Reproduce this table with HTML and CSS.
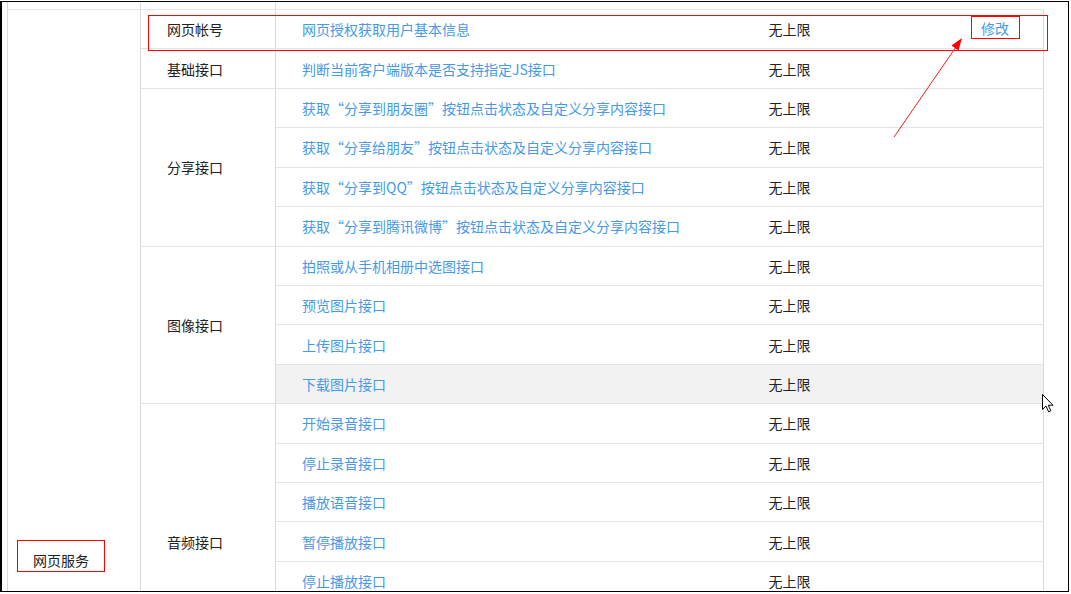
FILE: index.html
```html
<!DOCTYPE html>
<html lang="zh-CN">
<head>
<meta charset="utf-8">
<title>接口权限</title>
<link rel="stylesheet" href="styles.css">
</head>
<body>
<div class="frame">
  <table class="perm">
    <colgroup>
      <col class="w1"><col class="w2"><col class="w3"><col class="w4"><col class="w5">
    </colgroup>
    <tr class="partial">
      <td class="c1"></td><td class="c2"></td><td class="c3" colspan="3"></td>
    </tr>
    <tr class="r">
      <td class="c1 svc" rowspan="17"><span class="svc-label">网页服务</span></td>
      <td class="c2">网页帐号</td>
      <td class="c3"><a class="link">网页授权获取用户基本信息</a></td>
      <td class="c4">无上限</td>
      <td class="c5"><a class="link edit">修改</a></td>
    </tr>
    <tr class="r">
      <td class="c2">基础接口</td>
      <td class="c3"><a class="link">判断当前客户端版本是否支持指定JS接口</a></td>
      <td class="c4">无上限</td><td class="c5"></td>
    </tr>
    <tr class="r">
      <td class="c2" rowspan="4">分享接口</td>
      <td class="c3"><a class="link">获取“分享到朋友圈”按钮点击状态及自定义分享内容接口</a></td>
      <td class="c4">无上限</td><td class="c5"></td>
    </tr>
    <tr class="r">
      <td class="c3"><a class="link">获取“分享给朋友”按钮点击状态及自定义分享内容接口</a></td>
      <td class="c4">无上限</td><td class="c5"></td>
    </tr>
    <tr class="r">
      <td class="c3"><a class="link">获取“分享到QQ”按钮点击状态及自定义分享内容接口</a></td>
      <td class="c4">无上限</td><td class="c5"></td>
    </tr>
    <tr class="r">
      <td class="c3"><a class="link">获取“分享到腾讯微博”按钮点击状态及自定义分享内容接口</a></td>
      <td class="c4">无上限</td><td class="c5"></td>
    </tr>
    <tr class="r">
      <td class="c2" rowspan="4">图像接口</td>
      <td class="c3"><a class="link">拍照或从手机相册中选图接口</a></td>
      <td class="c4">无上限</td><td class="c5"></td>
    </tr>
    <tr class="r">
      <td class="c3"><a class="link">预览图片接口</a></td>
      <td class="c4">无上限</td><td class="c5"></td>
    </tr>
    <tr class="r">
      <td class="c3"><a class="link">上传图片接口</a></td>
      <td class="c4">无上限</td><td class="c5"></td>
    </tr>
    <tr class="r hover">
      <td class="c3"><a class="link">下载图片接口</a></td>
      <td class="c4">无上限</td><td class="c5"></td>
    </tr>
    <tr class="r">
      <td class="c2" rowspan="7">音频接口</td>
      <td class="c3"><a class="link">开始录音接口</a></td>
      <td class="c4">无上限</td><td class="c5"></td>
    </tr>
    <tr class="r">
      <td class="c3"><a class="link">停止录音接口</a></td>
      <td class="c4">无上限</td><td class="c5"></td>
    </tr>
    <tr class="r">
      <td class="c3"><a class="link">播放语音接口</a></td>
      <td class="c4">无上限</td><td class="c5"></td>
    </tr>
    <tr class="r">
      <td class="c3"><a class="link">暂停播放接口</a></td>
      <td class="c4">无上限</td><td class="c5"></td>
    </tr>
    <tr class="r">
      <td class="c3"><a class="link">停止播放接口</a></td>
      <td class="c4">无上限</td><td class="c5"></td>
    </tr>
    <tr class="r">
      <td class="c3"><a class="link">监听语音播放完毕接口</a></td>
      <td class="c4">无上限</td><td class="c5"></td>
    </tr>
    <tr class="r">
      <td class="c3"><a class="link">上传语音接口</a></td>
      <td class="c4">无上限</td><td class="c5"></td>
    </tr>
  </table>
</div>

<div class="note-box"></div>
<svg class="overlay" width="1071" height="594" viewBox="0 0 1071 594" aria-hidden="true">
  <line x1="894" y1="137" x2="956" y2="47" stroke="#ff1a1a" stroke-width="1"/>
  <polygon points="962,38 951.5,45.6 958.5,50.4" fill="#ff0000"/>
</svg>
<svg class="cursor" width="14" height="21" viewBox="0 0 14 21" aria-hidden="true">
  <path d="M1.5 1.5 L1.5 16.5 L5 13 L7.6 18.8 L9.8 17.8 L7.3 12.2 L12 12.2 Z" fill="#fff" stroke="#000" stroke-width="1" stroke-linejoin="miter"/>
</svg>
</body>
</html>
```

FILE: styles.css
```css
html, body {
  margin: 0;
  padding: 0;
  background: #fff;
}
body {
  position: relative;
  width: 1071px;
  height: 594px;
  overflow: hidden;
  font-family: "Microsoft YaHei", "Noto Sans CJK SC", "Noto Sans", sans-serif;
  font-size: 14px;
  color: #222;
}
.frame {
  margin-top: 1px;
  width: 1069px;
  height: 591px;
  box-sizing: border-box;
  border: 1px solid #000;
  border-left-width: 2px;
  overflow: hidden;
  background: #fff;
}
.perm {
  margin-left: 5px;
  border-collapse: collapse;
  table-layout: fixed;
  width: 1036px;
}
.w1 { width: 133px; }
.w2 { width: 135px; }
.w3 { width: 493px; }
.w4 { width: 182px; }
.w5 { width: 93px; }

.perm td {
  border: 1px solid #e4e4e4;
  border-left-color: #d9d9d9;
  border-right-color: #d9d9d9;
  padding: 0;
  line-height: 20px;
  vertical-align: middle;
  white-space: nowrap;
  color: #222;
}
.perm tr.partial td {
  border-top: none;
  height: 7px;
}
.perm tr.r {
  height: 39.43px;
}
.perm td.c1 { padding-left: 9px; }
.perm td.c2 { padding-left: 26px; }
.perm td.c3 { padding-left: 26px; border-right: none; }
.perm td.c4 { border-left: none; border-right: none; padding-left: 0; }
.perm td.c5 { border-left: none; padding-left: 20px; }
.perm tr.hover td { background: #f2f2f2; }

.perm td.svc {
  vertical-align: top;
  padding-top: 530px;
}
.svc-label {
  display: inline-block;
  border: 1px solid #f00;
  padding: 9px 15px 1px;
  line-height: 20px;
  color: #222;
}
.link {
  color: #459ae9;
  text-decoration: none;
  cursor: pointer;
}
.edit {
  display: inline-block;
  box-sizing: border-box;
  width: 49px;
  height: 23px;
  border: 1px solid #f00;
  padding: 1px 0 0;
  text-align: center;
  line-height: 20px;
  margin-bottom: 4px;
}
.note-box {
  position: absolute;
  left: 148px;
  top: 15px;
  width: 900px;
  height: 36px;
  box-sizing: border-box;
  border: 1px solid #f00;
}
.overlay {
  position: absolute;
  left: 0;
  top: 0;
  pointer-events: none;
}
.cursor {
  position: absolute;
  left: 1041px;
  top: 393px;
  pointer-events: none;
}
```
